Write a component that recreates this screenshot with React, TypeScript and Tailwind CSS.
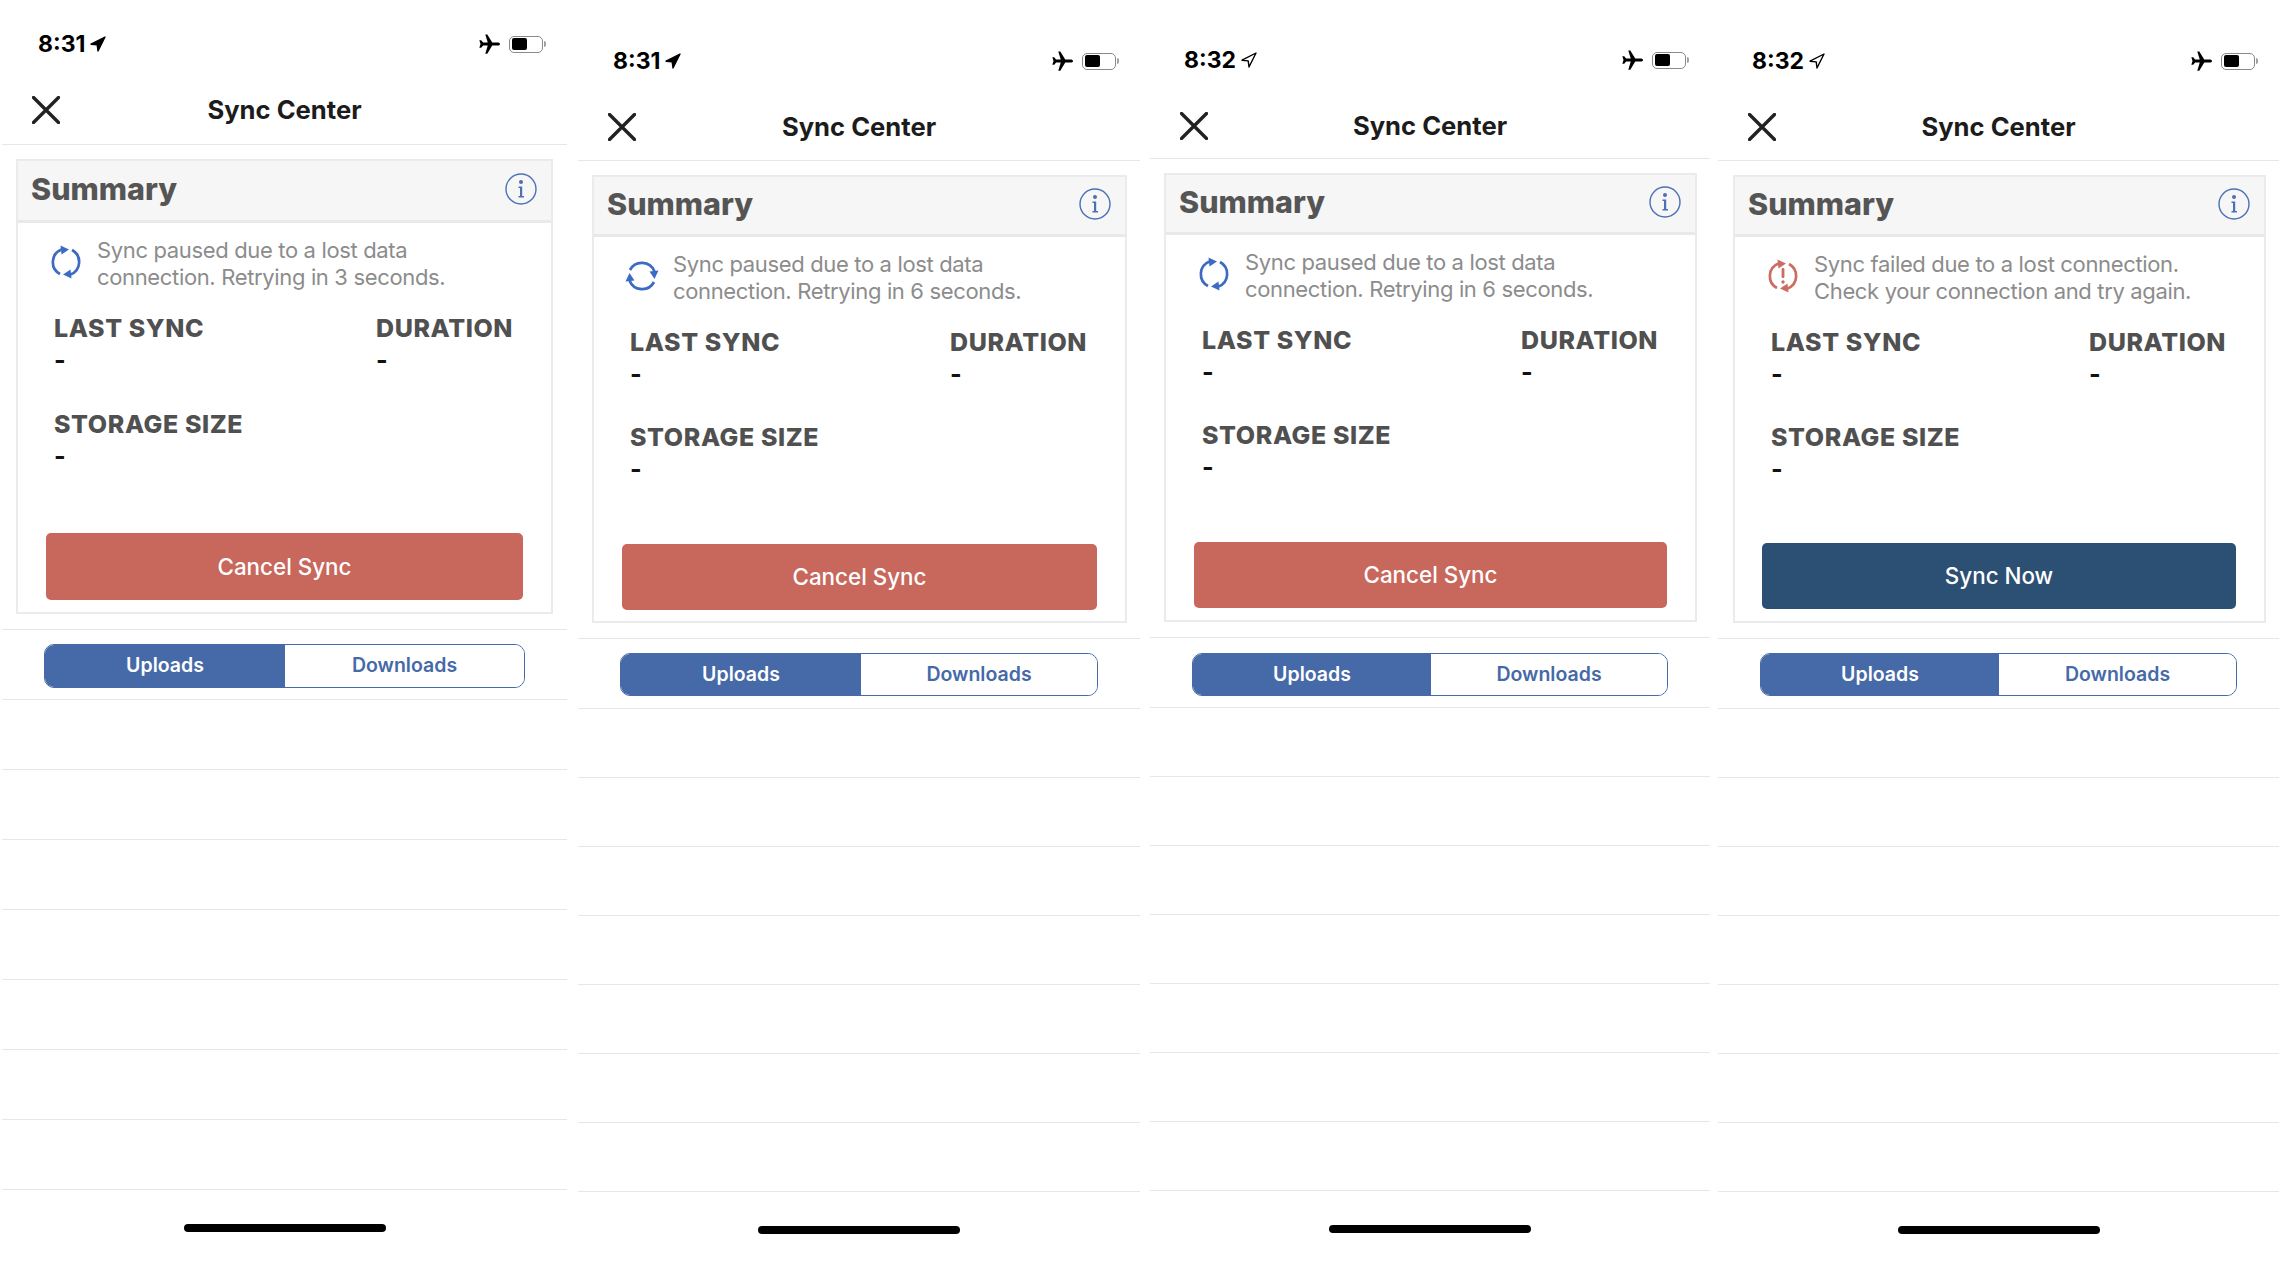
import React from 'react';

interface PanelConfig {
  time: string;
  arrowFilled: boolean;
  section: string;
  status: string;
  nav: string;
  cardWrap: string;
  cardHeight: string;
  headerHeight: string;
  stats: string;
  messagePad: string;
  button: string;
  buttonWrap: string;
  tabsRow: string;
  tabs: string;
  split: string;
  row: string;
  home: string;
  message: [string, string];
  action: string;
  iconKind: 'vertical' | 'horizontal' | 'failed';
}

const panels: PanelConfig[] = [
  {
    time: '8:31',
    arrowFilled: true,
    section: 'ml-[2px] w-[565px]',
    status: 'h-[76px] pt-[28px] pl-[36px] pr-[21px]',
    nav: 'h-[69px]',
    cardWrap: 'pt-[14px] pb-[15px] mx-[14px]',
    cardHeight: 'h-[455px]',
    headerHeight: 'h-[62px]',
    messagePad: 'pt-[14px]',
    stats: 'mt-[22px] gap-y-[32px] grid-cols-[322px_1fr]',
    button: 'h-[67px] bg-[#c8675c]',
    buttonWrap: 'mx-[28px] mb-[12px]',
    tabsRow: 'h-[70px] pt-[14px] px-[42px]',
    tabs: 'h-[44px]',
    split: 'w-[240px]',
    row: 'h-[70px]',
    home: 'mt-[34px]',
    message: ['Sync paused due to a lost data', 'connection. Retrying in 3 seconds.'],
    action: 'Cancel Sync',
    iconKind: 'vertical',
  },
  {
    time: '8:31',
    arrowFilled: true,
    section: 'ml-[11px] w-[562px]',
    status: 'h-[94px] pt-[45px] pl-[35px] pr-[21px]',
    nav: 'h-[67px]',
    cardWrap: 'pt-[14px] pb-[15px] ml-[14px] mr-[13px]',
    cardHeight: 'h-[448px]',
    headerHeight: 'h-[60px]',
    messagePad: 'pt-[14px]',
    stats: 'mt-[22px] gap-y-[31px] grid-cols-[320px_1fr]',
    button: 'h-[66px] bg-[#c8675c]',
    buttonWrap: 'mx-[28px] mb-[11px]',
    tabsRow: 'h-[70px] pt-[14px] px-[42px]',
    tabs: 'h-[43px]',
    split: 'w-[240px]',
    row: 'h-[69px]',
    home: 'mt-[34px]',
    message: ['Sync paused due to a lost data', 'connection. Retrying in 6 seconds.'],
    action: 'Cancel Sync',
    iconKind: 'horizontal',
  },
  {
    time: '8:32',
    arrowFilled: false,
    section: 'ml-[10px] w-[560px]',
    status: 'h-[94px] pt-[44px] pl-[34px] pr-[21px]',
    nav: 'h-[65px]',
    cardWrap: 'pt-[14px] pb-[15px] ml-[14px] mr-[13px]',
    cardHeight: 'h-[449px]',
    headerHeight: 'h-[60px]',
    messagePad: 'pt-[14px]',
    stats: 'mt-[22px] gap-y-[31px] grid-cols-[319px_1fr]',
    button: 'h-[66px] bg-[#c8675c]',
    buttonWrap: 'mx-[28px] mb-[12px]',
    tabsRow: 'h-[70px] pt-[15px] px-[42px]',
    tabs: 'h-[43px]',
    split: 'w-[238px]',
    row: 'h-[69px]',
    home: 'mt-[34px]',
    message: ['Sync paused due to a lost data', 'connection. Retrying in 6 seconds.'],
    action: 'Cancel Sync',
    iconKind: 'vertical',
  },
  {
    time: '8:32',
    arrowFilled: false,
    section: 'ml-[8px] w-[561px]',
    status: 'h-[94px] pt-[45px] pl-[34px] pr-[21px]',
    nav: 'h-[67px]',
    cardWrap: 'pt-[14px] pb-[15px] ml-[15px] mr-[13px]',
    cardHeight: 'h-[448px]',
    headerHeight: 'h-[60px]',
    messagePad: 'pt-[14px]',
    stats: 'mt-[22px] gap-y-[31px] grid-cols-[318px_1fr]',
    button: 'h-[66px] bg-[#2c5073]',
    buttonWrap: 'ml-[27px] mr-[28px] mb-[12px]',
    tabsRow: 'h-[70px] pt-[14px] px-[42px]',
    tabs: 'h-[43px]',
    split: 'w-[238px]',
    row: 'h-[69px]',
    home: 'mt-[34px]',
    message: ['Sync failed due to a lost connection.', 'Check your connection and try again.'],
    action: 'Sync Now',
    iconKind: 'failed',
  },
];

function LocationArrow({ filled }: { filled: boolean }) {
  return (
    <svg viewBox="0 0 16 16" className="ml-[5px] w-[16px] h-[16px]">
      <path
        d="M1 8.2 L15 1 L8 15 L7.2 8.9 Z"
        fill={filled ? '#000' : 'none'}
        stroke="#000"
        strokeWidth="1.4"
        strokeLinejoin="round"
      />
    </svg>
  );
}

function StatusBar({ config }: { config: PanelConfig }) {
  return (
    <div className={config.status}>
      <div className="flex items-center justify-between h-[32px]">
        <div className="flex items-center">
          <span className="text-[23px] font-bold text-black leading-none">{config.time}</span>
          <LocationArrow filled={config.arrowFilled} />
        </div>
        <div className="flex items-center">
          {/* airplane mode */}
          <svg viewBox="0 0 24 24" className="w-[23px] h-[22px] mr-[8px]">
            <path
              d="M23.5 12c0-1.1-1.3-1.7-2.7-1.7H15L9.6 1.5H7.4l2.7 8.8H5L3 7.8H.9L2.2 12 .9 16.2H3L5 13.7h5.1L7.4 22.5h2.2l5.4-8.8h5.8c1.4 0 2.7-.6 2.7-1.7z"
              fill="#000"
            />
          </svg>
          {/* battery */}
          <div className="flex items-center">
            <div className="w-[34px] h-[17px] rounded-[5px] border-[1.5px] border-[#8a8a8a] p-[1.5px]">
              <div className="w-[15px] h-full rounded-[2px] bg-black" />
            </div>
            <div className="ml-[1px] w-[2px] h-[6px] rounded-r-full bg-[#a0a0a0]" />
          </div>
        </div>
      </div>
    </div>
  );
}

function SyncIcon({ kind }: { kind: PanelConfig['iconKind'] }) {
  const color = kind === 'failed' ? '#cb6d62' : '#3d6bc4';
  return (
    <svg
      viewBox="0 0 34 34"
      className={kind === 'horizontal' ? '-mt-[4px] w-[34px] h-[34px] rotate-90' : '-mt-[4px] w-[34px] h-[34px]'}
    >
      <g fill="none" stroke={color} strokeWidth="2.7">
        <path d="M11 29 A13.5 13.5 0 0 1 12.5 4.5" />
        <path d="M23 5 A13.5 13.5 0 0 1 21.5 29.5" />
      </g>
      <path d="M11.5 0.5 L20 4.5 L12.5 9.5 Z" fill={color} />
      <path d="M22.5 33.5 L14 29.5 L21.5 24.5 Z" fill={color} />
      {kind === 'failed' && (
        <g fill={color}>
          <rect x="15.6" y="9" width="2.8" height="10" rx="1" />
          <circle cx="17" cy="23" r="1.7" />
        </g>
      )}
    </svg>
  );
}

function Stat({ label }: { label: string }) {
  return (
    <div>
      <div className="text-[25px] leading-[30px] font-extrabold tracking-[0.6px] text-[#505050] whitespace-nowrap">{label}</div>
      <div className="text-[25px] leading-[34px] font-bold text-[#111]">-</div>
    </div>
  );
}

function Panel({ config }: { config: PanelConfig }) {
  return (
    <section className={config.section}>
      <StatusBar config={config} />

      {/* Nav */}
      <div className={`${config.nav} relative flex items-center justify-center border-b border-[#e6e6e6]`}>
        <svg viewBox="0 0 28 28" className="absolute left-[30px] w-[28px] h-[28px]">
          <path d="M1.5 1.5 L26.5 26.5 M26.5 1.5 L1.5 26.5" stroke="#222" strokeWidth="3.4" strokeLinecap="round" />
        </svg>
        <h1 className="text-[25.6px] font-bold text-[#1c1c1c] leading-none">Sync Center</h1>
      </div>

      {/* Summary */}
      <div className="border-b border-[#e6e6e6]">
        <div className={config.cardWrap}>
          <div className={`${config.cardHeight} flex flex-col border-2 border-[#ebebeb]`}>
            <div className={`${config.headerHeight} flex items-center justify-between pl-[13px] pr-[14px] pb-[3px] bg-[#f6f6f6] border-b-[3px] border-[#e9e9e9]`}>
              <h2 className="text-[30.5px] font-extrabold text-[#555] leading-none">Summary</h2>
              <svg viewBox="0 0 32 32" className="w-[32px] h-[32px]">
                <circle cx="16" cy="16" r="15" fill="none" stroke="#4a70b5" strokeWidth="1.4" />
                <circle cx="16" cy="9" r="2" fill="#4a70b5" />
                <path d="M13.5 13.5 H17.2 V23 H19 V24.5 H13.5 V23 H15 V15 H13.5 Z" fill="#4a70b5" />
              </svg>
            </div>

            <div className={`${config.messagePad} flex items-center pl-[31px]`}>
              <SyncIcon kind={config.iconKind} />
              <p className="ml-[14px] text-[22px] leading-[27px] tracking-[-0.35px] text-[#8c8c8c] whitespace-nowrap">
                {config.message[0]}
                <br />
                {config.message[1]}
              </p>
            </div>

            <div className={`${config.stats} grid pl-[36px]`}>
              <Stat label="LAST SYNC" />
              <Stat label="DURATION" />
              <Stat label="STORAGE SIZE" />
            </div>

            <div className={`${config.buttonWrap} mt-auto`}>
              <button className={`${config.button} w-full rounded-[5px] text-[22.4px] font-medium text-white`}>
                {config.action}
              </button>
            </div>
          </div>
        </div>
      </div>

      {/* Tabs */}
      <div className={`${config.tabsRow} border-b border-[#e6e6e6]`}>
        <div className={`${config.tabs} flex rounded-[10px] border-[1.5px] border-[#4669a8] overflow-hidden text-[19.5px] font-semibold`}>
          <div className={`${config.split} flex items-center justify-center bg-[#4669a8] text-white`}>Uploads</div>
          <div className="flex-1 flex items-center justify-center bg-white text-[#4669a8]">Downloads</div>
        </div>
      </div>

      {/* Empty rows */}
      {[0, 1, 2, 3, 4, 5, 6].map((i) => (
        <div key={i} className={`${config.row} border-b border-[#e6e6e6]`} />
      ))}

      <div className={`${config.home} w-[202px] h-[8px] mx-auto rounded-full bg-black`} />
    </section>
  );
}

export default function App() {
  return (
    <div className="w-[2286px] h-[1274px] overflow-hidden flex bg-white font-['Inter',sans-serif]">
      {panels.map((config, i) => (
        <Panel key={i} config={config} />
      ))}
    </div>
  );
}
